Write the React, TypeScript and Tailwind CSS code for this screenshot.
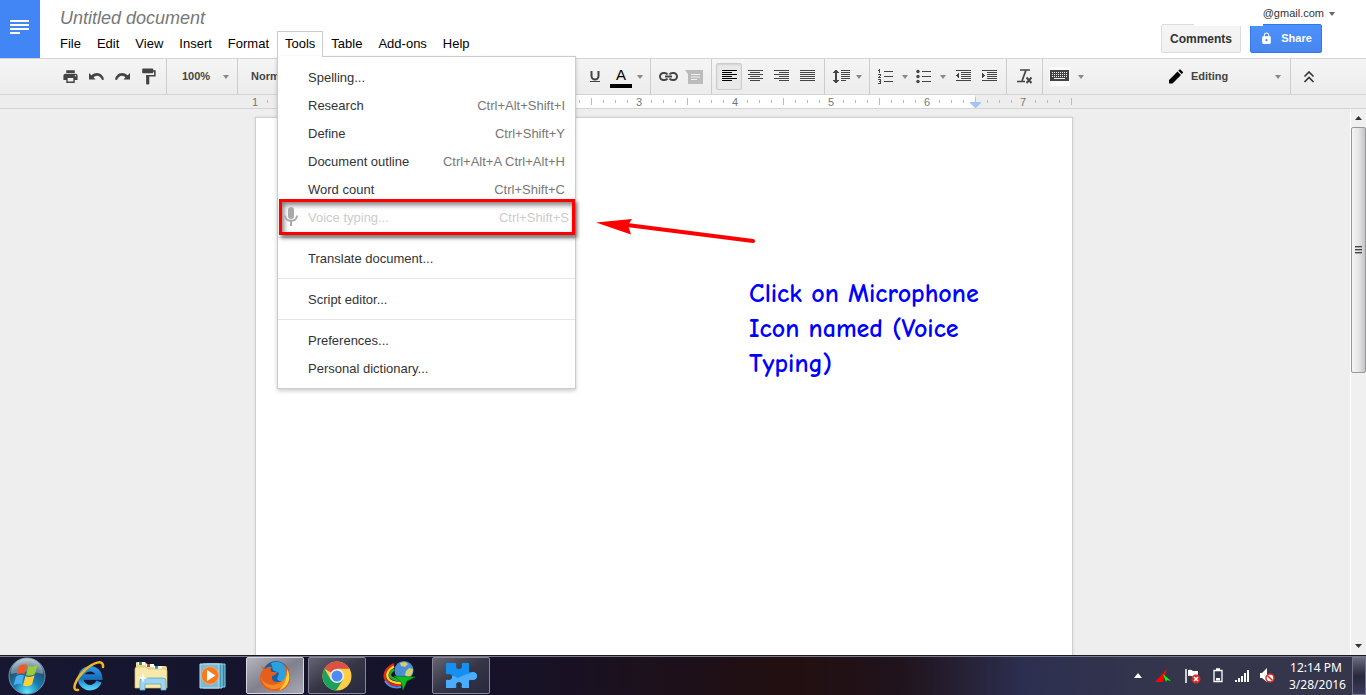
import type { ReactNode } from 'react'
import { MdFormatPaint, MdLock, MdPrint } from 'react-icons/md'

type Bar = [x: number, y: number, width: number]

// Icon made of one-pixel horizontal bars
function Bars({ bars, width = 15, children }: { bars: Bar[]; width?: number; children?: ReactNode }) {
  return (
    <svg width={width} height="13" viewBox={`0 0 ${width} 13`} fill="currentColor" shapeRendering="crispEdges">
      {bars.map(([x, y, w]) => (
        <rect key={y} x={x} y={y} width={w} height="1" />
      ))}
      {children}
    </svg>
  )
}

const rows = [0, 2, 4, 6, 8, 10]
const alignLeft = rows.map((y, i): Bar => [0, y, i % 2 ? 10 : 15])
const alignCenter = rows.map((y, i): Bar => (i % 2 ? [2, y, 10] : [0, y, 15]))
const alignRight = rows.map((y, i): Bar => (i % 2 ? [5, y, 10] : [0, y, 15]))
const justify = rows.map((y): Bar => [0, y, 15])
const indentBars = rows.map((y, i): Bar => (i === 0 || i === 5 ? [0, y, 15] : [5, y, 10]))

function Caret({ className = 'text-[#888]' }: { className?: string }) {
  return (
    <svg width="6" height="4" viewBox="0 0 6 4" className={`shrink-0 ${className}`}>
      <path d="M0 0h6L3 4z" fill="currentColor" />
    </svg>
  )
}

function UndoArrow({ className = '' }: { className?: string }) {
  return (
    <svg width="15" height="10" viewBox="0 0 15 10" fill="currentColor" className={className}>
      <path d="M0 1l2.300 2.300Q5 1 8 1q5.500 0 7 6.500l-2 .5Q11.500 4 8 3.800 6 3.800 4.500 5.300L6.500 7.500H0z" />
    </svg>
  )
}

function ToolButton({ label, active, className = 'w-[26px]', children }: { label: string; active?: boolean; className?: string; children: ReactNode }) {
  return (
    <button
      aria-label={label}
      className={`flex h-[27px] shrink-0 items-center justify-center rounded-xs border ${className} ${
        active ? 'border-[#ccc] bg-[#e9e9e9] text-black shadow-[inset_0_1px_2px_rgba(0,0,0,0.1)]' : 'border-transparent text-[#444]'
      }`}
    >
      {children}
    </button>
  )
}

function Group({ className = 'px-1', children }: { className?: string; children: ReactNode }) {
  return <div className={`flex h-full shrink-0 items-center border-r border-[#ccc] ${className}`}>{children}</div>
}

const menusBefore = ['File', 'Edit', 'View', 'Insert', 'Format']
const menusAfter = ['Table', 'Add-ons', 'Help']

const toolsSections = [
  [
    { name: 'Spelling...' },
    { name: 'Research', keys: 'Ctrl+Alt+Shift+I' },
    { name: 'Define', keys: 'Ctrl+Shift+Y' },
    { name: 'Document outline', keys: 'Ctrl+Alt+A Ctrl+Alt+H' },
    { name: 'Word count', keys: 'Ctrl+Shift+C' },
    { name: 'Voice typing...', keys: 'Ctrl+Shift+S', marked: true },
  ],
  [{ name: 'Translate document...' }],
  [{ name: 'Script editor...' }],
  [{ name: 'Preferences...' }, { name: 'Personal dictionary...' }],
] as { name: string; keys?: string; marked?: boolean }[][]

function ToolsMenu() {
  return (
    <div className="absolute top-[24px] -left-px z-20 w-[299px] border border-[#ccc] bg-white shadow-[0_2px_4px_rgba(0,0,0,0.2)]">
      {/* Joins the open tab to the panel */}
      <span className="absolute -top-px left-0 h-px w-[44px] bg-white" />
      {toolsSections.map((items, i) => (
        <div key={i} className={`py-[6px] ${i ? 'border-t border-[#e5e5e5]' : ''}`}>
          {items.map((item) => (
            <button
              key={item.name}
              className={`relative flex h-7 w-full items-center justify-between pt-[2px] pl-[30px] text-left ${
                item.marked ? 'pr-[6px] text-[#ccc]' : 'pr-[10px] text-[#333]'
              }`}
            >
              {item.marked && (
                <>
                  <span className="absolute inset-y-[-4px] right-0 left-px border-[3px] border-[#f00] shadow-[2px_3px_4px_rgba(0,0,0,0.55),inset_2px_3px_5px_rgba(0,0,0,0.5)]" />
                  <svg className="absolute top-1 left-[6px]" width="14" height="20" viewBox="0 0 14 20" fill="none">
                    <rect x="4" y="0" width="6" height="12" rx="3" fill="#aaa" />
                    <path d="M1 8.500c0 7 12 7 12 0" stroke="#aaa" strokeWidth="2" />
                    <path d="M7 14v5" stroke="#aaa" strokeWidth="2" />
                  </svg>
                </>
              )}
              <span>{item.name}</span>
              {item.keys && <span className={item.marked ? '' : 'text-[#777]'}>{item.keys}</span>}
            </button>
          ))}
        </div>
      ))}
    </div>
  )
}

function Header() {
  const menuClass = 'h-[26px] border border-transparent px-[7px]'
  return (
    <header className="flex h-[58px] shrink-0 bg-white">
      <a href="#home" aria-label="Docs home" className="flex w-10 items-center justify-center bg-[#4285f4]">
        <svg width="20" height="14" viewBox="0 0 20 14" fill="#fff" shapeRendering="crispEdges" className="mb-1">
          <path d="M0 0h19v2H0zM0 4h19v2H0zM0 8h19v2H0zM0 12h10v2H0z" />
        </svg>
      </a>
      <div className="flex flex-col pl-3">
        <h1 className="mt-1 h-[27px] pl-2 text-[18px] leading-7 text-[#777] italic">Untitled document</h1>
        <nav className="flex text-[13px] leading-6 text-black">
          {menusBefore.map((m) => (
            <button key={m} className={menuClass}>{m}</button>
          ))}
          <div className="relative h-[26px] border border-b-0 border-[#ccc] bg-white">
            <button className="h-[24px] px-[7px]">Tools</button>
            <ToolsMenu />
          </div>
          {menusAfter.map((m) => (
            <button key={m} className={menuClass}>{m}</button>
          ))}
        </nav>
      </div>
      <div className="ml-auto flex flex-col items-end pr-[30px]">
        <div className="flex h-6">
          <span className="relative z-10 h-[26px] w-[69px] bg-white" />
          <button className="flex items-center gap-1 pt-[3px] text-[11px] text-[#333]">
            @gmail.com <Caret className="w-2 text-[#666]" />
          </button>
        </div>
        <div className="flex gap-[9px] pr-[14px]">
          <button className="h-[29px] w-20 rounded-xs border border-[#dcdcdc] bg-linear-to-b from-[#f5f5f5] to-[#f1f1f1] text-[12px] font-bold text-[#333]">
            Comments
          </button>
          <button className="flex h-[29px] w-[72px] items-center justify-center gap-2 rounded-xs border border-[#3079ed] bg-linear-to-b from-[#4d90fe] to-[#4787ed] text-[11px] font-bold text-white">
            <MdLock size={13} /> Share
          </button>
        </div>
      </div>
    </header>
  )
}

function Toolbar() {
  const selectClass = 'min-w-0 flex-1 appearance-none bg-transparent text-[11px] font-bold text-[#444] outline-none'
  return (
    <div className="flex h-[37px] shrink-0 items-center border-y border-[#d4d4d4] bg-linear-to-b from-[#f5f5f5] to-[#ececec]">
      <Group className="pr-[5px] pl-[57px]">
        <ToolButton label="Print"><MdPrint size={17} /></ToolButton>
        <ToolButton label="Undo"><UndoArrow /></ToolButton>
        <ToolButton label="Redo"><UndoArrow className="-scale-x-100" /></ToolButton>
        <ToolButton label="Paint format">
          <MdFormatPaint size={19} />
        </ToolButton>
      </Group>
      <Group className="w-[71px] pr-2 pl-[15px]">
        <select aria-label="Zoom" className={selectClass}><option>100%</option></select>
        <Caret />
      </Group>
      <div className="flex w-[344px] shrink-0 items-center pl-[13px]">
        <select aria-label="Styles" className={selectClass}><option>Normal text</option></select>
      </div>
      <Group className="pr-[5px]">
        <ToolButton label="Underline">
          <svg width="12" height="13" viewBox="0 0 12 13" fill="none" stroke="currentColor">
            <path d="M2.500 1v5a3.500 3.500 0 0 0 7 0V1" strokeWidth="2" />
            <path d="M1 11.500h10" />
          </svg>
        </ToolButton>
        <ToolButton label="Text color">
          <span className="border-b-4 border-black px-[6px] text-[15px] leading-[18px] text-black">A</span>
        </ToolButton>
        <button aria-label="More colors" className="flex w-[11px] justify-center"><Caret /></button>
      </Group>
      <Group>
        <ToolButton label="Insert link">
          <svg width="19" height="9" viewBox="0 0 19 9" fill="none" stroke="currentColor" strokeWidth="2">
            <path d="M8.500 2.500Q7.500 1 5.500 1h-1a3.500 3.500 0 0 0 0 7h1q2 0 3-1.500M10.500 2.500Q11.500 1 13.500 1h1a3.500 3.500 0 0 1 0 7h-1q-2 0-3-1.500M6 4.500h7" />
          </svg>
        </ToolButton>
        <ToolButton label="Insert comment">
          <svg width="18" height="14" viewBox="0 0 18 14">
            <path d="M0 0h18v14H3V4z" fill="#bbb" />
            <path d="M6 4.500h9M6 7h9M6 9.500h6" stroke="#f1f1f1" />
          </svg>
        </ToolButton>
      </Group>
      <Group>
        <ToolButton label="Left align" active><Bars bars={alignLeft} /></ToolButton>
        <ToolButton label="Center align"><Bars bars={alignCenter} /></ToolButton>
        <ToolButton label="Right align"><Bars bars={alignRight} /></ToolButton>
        <ToolButton label="Justify"><Bars bars={justify} /></ToolButton>
      </Group>
      <Group>
        <ToolButton label="Line spacing" className="w-9 gap-[6px]">
          <Bars width={17} bars={rows.map((y, i) => [8, y, i === 5 ? 5 : 9])}>
            <path d="M2 0h2v13H2zM1 1h4v1H1zM0 2h6v1H0zM0 10h6v1H0zM1 11h4v1H1z" />
          </Bars>
          <Caret />
        </ToolButton>
      </Group>
      <Group>
        <ToolButton label="Numbered list" className="w-[38px] gap-[9px]">
          <svg width="15" height="15" viewBox="0 0 15 15" fill="currentColor" shapeRendering="crispEdges">
            <path d="M6 2h9v1H6zM6 7h9v1H6zM6 12h9v1H6z" />
            <path d="M1 0h1v4H1zM0 1h1v1H0zM0 5h3v1H0zM2 6h1v1H2zM1 7h1v1H1zM0 8h3v1H0zM0 10h3v1H0zM2 11h1v3H2zM1 12h1v1H1zM0 14h3v1H0z" />
          </svg>
          <Caret />
        </ToolButton>
        <ToolButton label="Bulleted list" className="w-[38px] gap-[9px]">
          <svg width="15" height="15" viewBox="0 0 15 15" fill="currentColor">
            <path d="M6 2h9v1H6zM6 7h9v1H6zM6 12h9v1H6z" />
            <circle cx="2" cy="2.500" r="1.700" />
            <circle cx="2" cy="7.500" r="1.700" />
            <circle cx="2" cy="12.500" r="1.700" />
          </svg>
          <Caret />
        </ToolButton>
        <ToolButton label="Decrease indent"><Bars bars={indentBars}><path d="M3 2v7L0 5.500z" /></Bars></ToolButton>
        <ToolButton label="Increase indent"><Bars bars={indentBars}><path d="M0 2v7l3-3.500z" /></Bars></ToolButton>
      </Group>
      <Group className="pr-1 pl-[5px]">
        <ToolButton label="Clear formatting">
          <svg width="16" height="15" viewBox="0 0 16 15" fill="none" stroke="currentColor">
            <path d="M3 1h10M0 12.500h8" strokeWidth="1.500" />
            <path d="M9 1L5 12" strokeWidth="1.700" />
            <path d="M9.500 8.500l5 5.500M14.500 8.500l-5 5.500" strokeWidth="1.900" />
          </svg>
        </ToolButton>
      </Group>
      <ToolButton label="Input tools" className="ml-[5px] w-9 gap-2">
        <svg width="21" height="19" viewBox="0 0 21 19" shapeRendering="crispEdges" className="shrink-0">
          <path d="M0 0h21v19H0z" fill="#fafafa" />
          <path d="M1 3h19v11H1z" fill="#444" />
          <path d="M3 5.500h15M3 7.500h15M3 9.500h15" stroke="#eee" strokeDasharray="1 1" />
          <path d="M5 11.500h11" stroke="#eee" />
        </svg>
        <Caret />
      </ToolButton>
      <div className="ml-auto flex h-full items-center">
        <div className="flex h-full w-[123px] items-center border-r border-[#ccc] pr-[9px]">
          <svg width="15" height="15" viewBox="0 0 15 15" className="mr-2 shrink-0">
            <path d="M1 11l8.500-8.500 3.500 3.500L4.500 14.500H1zM10.300 1.700l1-1q.7-.7 1.400 0l2 2q.7.700 0 1.400l-1 1z" fill="#000" />
          </svg>
          <select aria-label="Mode" className={selectClass}><option>Editing</option></select>
          <Caret />
        </div>
        <button aria-label="Hide menus" className="mr-[45px] ml-[6px] flex w-6 justify-center text-[#333]">
          <svg width="12" height="12" viewBox="0 0 12 12" fill="none" stroke="currentColor" strokeWidth="1.600">
            <path d="M1.500 5.500L6 1l4.500 4.500M1.500 11L6 6.500l4.500 4.500" />
          </svg>
        </button>
      </div>
    </div>
  )
}

const rulerLabels = [
  { inch: 0, label: 1 },
  { inch: 4, label: 3 },
  { inch: 5, label: 4 },
  { inch: 6, label: 5 },
  { inch: 7, label: 6 },
  { inch: 8, label: 7 },
]

function Ruler() {
  const ticks = Array.from({ length: 69 }, (_, i) => i).filter((i) => i % 8 !== 0)
  return (
    <div className="flex h-[14px] shrink-0 justify-center border-b border-[#d4d4d4] bg-[#ededed] pr-[38px]">
      <svg width="818" height="13" viewBox="0 0 818 13" className="overflow-visible font-['Liberation_Sans',sans-serif]">
        <path d="M96 0h624v13H96z" fill="#fff" />
        {ticks.map((i) => (
          <path key={i} d={i % 4 ? `M${i * 12 + 0.5} 5v3` : `M${i * 12 + 0.5} 3v7`} stroke="#bbb" />
        ))}
        {rulerLabels.map(({ inch, label }) => (
          <text key={inch} x={inch * 96} y="11" textAnchor="middle" fontSize="11" fill="#777">{label}</text>
        ))}
        <path d="M720.500 2v6" stroke="#bbb" />
        <path d="M715 7h11v1l-5 5h-1l-5-5z" fill="#a4c4f9" />
      </svg>
    </div>
  )
}

function ScrollBar() {
  return (
    <div className="flex w-4 shrink-0 flex-col border-l border-white bg-[#f0f0f0]">
      <div className="flex h-[18px] items-center justify-center">
        <svg width="7" height="4" viewBox="0 0 7 4"><path d="M0 4h7L3.500 0z" fill="#333" /></svg>
      </div>
      <div className="flex h-[246px] items-center justify-center rounded-xs border border-[#979797] bg-linear-to-r from-[#f5f5f5] via-[#e6e6e8] to-[#c4c4c8]">
        <svg width="7" height="8" viewBox="0 0 7 8" shapeRendering="crispEdges">
          <path d="M0 .5h7M0 3.500h7M0 6.500h7" stroke="#444" />
          <path d="M0 1.500h7M0 4.500h7M0 7.500h7" stroke="#aaa" />
        </svg>
      </div>
      <div className="mt-auto flex h-[18px] items-center justify-center">
        <svg width="7" height="4" viewBox="0 0 7 4"><path d="M0 0h7L3.500 4z" fill="#333" /></svg>
      </div>
    </div>
  )
}

function Canvas() {
  return (
    <main className="flex min-h-0 flex-1 bg-[#eee]">
      <div className="flex min-w-0 flex-1 justify-center overflow-hidden pt-2 pr-[22px]">
        <article className="relative w-[818px] shrink-0 border border-b-0 border-[#d0d0d0] bg-white shadow-[0_0_3px_rgba(0,0,0,0.1)]">
          <svg className="absolute top-[98px] left-[340px]" width="162" height="30" viewBox="0 0 162 30">
            <path d="M0 6.500L36 3 32 9 35 18.500z" fill="#f00" />
            <path d="M31 9L157 25" stroke="#f00" strokeWidth="4" strokeLinecap="round" />
          </svg>
          <p className="absolute top-[159px] left-[493px] w-[250px] font-['Comic_Sans_MS','Comic_Neue',Lato,sans-serif] text-[26px] leading-[35px] font-bold text-[#00f]">
            Click on Microphone Icon named (Voice Typing)
          </p>
        </article>
      </div>
      <ScrollBar />
    </main>
  )
}

function StartIcon() {
  return (
    <svg width="38" height="38" viewBox="0 0 38 38">
      <defs>
        <radialGradient id="orb" cx=".5" cy=".95" r=".9">
          <stop offset="0" stopColor="#5ce8ff" />
          <stop offset=".4" stopColor="#187fb5" />
          <stop offset=".75" stopColor="#245273" />
          <stop offset="1" stopColor="#8fa5b4" />
        </radialGradient>
      </defs>
      <circle cx="19" cy="19" r="18" fill="url(#orb)" stroke="#6f94a8" />
      <path d="M3 17a16 16 0 0 1 32 0q-16-5-32 0z" fill="#fff" opacity=".32" />
      <path d="M11 9q4-3 8-1l-2.500 9q-4-2-8 1z" fill="#f15a24" />
      <path d="M20.500 8.500q4 2 9-.5l-2.500 9q-4 3-9 1z" fill="#9acb3c" />
      <path d="M8 19.500q4-3 8-1l-2.500 9q-4-2-8 1z" fill="#4aaef0" />
      <path d="M17.500 19q4 2 9-.5l-2.500 9q-4 3-9 1z" fill="#ffd035" />
    </svg>
  )
}

function ExplorerIcon() {
  return (
    <svg width="34" height="32" viewBox="0 0 34 32" fill="none">
      <defs>
        <linearGradient id="ie" x1="0" y1="0" x2="0" y2="1">
          <stop offset="0" stopColor="#2b91dc" />
          <stop offset=".5" stopColor="#1470c0" />
          <stop offset="1" stopColor="#4fc9f5" />
        </linearGradient>
      </defs>
      <path d="M27 21.500a9.500 9.500 0 1 1 .5-4.500H10" stroke="url(#ie)" strokeWidth="5.500" />
      <path d="M6 30C-1 31 3 20 12 11S32-1 31 7" stroke="#f2b620" strokeWidth="2.500" strokeLinecap="round" />
    </svg>
  )
}

function FolderIcon() {
  return (
    <svg width="34" height="30" viewBox="0 0 34 30">
      <path d="M2 2q0-1 1-1h8l2 2h6l2 2h10q2 0 2 2v20H2z" fill="#eed98a" />
      <path d="M4 1h7v3H4z" fill="#fff" />
      <path d="M5 1h3v3H5z" fill="#1ba034" />
      <path d="M12 3h8v3h-8z" fill="#fff" />
      <path d="M13 3h3v3h-3z" fill="#d9402b" />
      <path d="M20 5h8v3h-8z" fill="#fff" />
      <path d="M21 5h3v3h-3z" fill="#2b8fe0" />
      <path d="M1 8q0-2 2-2h9l2 2h17q2 0 2 2v17H1z" fill="#f7e9a9" stroke="#d8bd62" strokeWidth=".7" />
      <path d="M6 29v-9q0-3 3-3h20q3 0 3 3v9h-5v-6H11v6z" fill="#9ed4ee" stroke="#5aa6ce" strokeWidth=".8" />
      <path d="M9 12l1 4 4 1-4 1-1 4-1-4-4-1 4-1z" fill="#fff" />
    </svg>
  )
}

function PlayerIcon() {
  return (
    <svg width="28" height="26" viewBox="0 0 28 26">
      <path d="M7 1h19v23H7z" fill="#2f83a8" stroke="#8ccbe4" />
      <path d="M4 1h19v24H4z" fill="#3f97bd" stroke="#9bd6ec" />
      <path d="M1 1h19v24H1z" fill="#7fb9d3" stroke="#b7e2f2" />
      <circle cx="11" cy="12.500" r="8.700" fill="#f47a20" stroke="#ffb27a" strokeWidth=".7" />
      <path d="M8 7l8.500 5.500L8 18z" fill="#fff" />
    </svg>
  )
}

function FirefoxIcon() {
  return (
    <svg width="32" height="32" viewBox="0 0 32 32">
      <circle cx="17" cy="14" r="13" fill="#155fa8" />
      <path d="M12 3q9-4 15 4 3 6 0 12-5 5-9 0l2-6-6-3z" fill="#2ca1dc" />
      <path d="M2 5l4 4q3-3 7-2-3 3 0 5h5q-1 3-5 4-1 5 4 6 8 1 10-7 1-6-4-11 7 3 8 11 1 15-14 16Q3 31 1 19 1 13 4 10z" fill="#e65e1c" />
      <path d="M2 17q3 8 12 8 10-1 14-11 1 13-11 15Q5 30 2 17z" fill="#f58a25" />
      <path d="M28 9q3 5 2 11-2 8-10 10 9-8 8-21z" fill="#ffcf3d" />
    </svg>
  )
}

function ChromeIcon() {
  return (
    <svg width="30" height="30" viewBox="0 0 30 30">
      <circle cx="15" cy="15" r="14.500" fill="#ffcd46" />
      <path d="M15 15L2.440 7.750A14.500 14.500 0 0 1 27.560 7.750H15z" fill="#dd5144" />
      <path d="M2.440 7.750A14.500 14.500 0 0 0 14 29.500l7.300-10.900L15 15 8.700 18.600z" fill="#1aa15f" />
      <circle cx="15" cy="15" r="7" fill="#f1f1f1" />
      <circle cx="15" cy="15" r="5.500" fill="#4c8bf5" />
    </svg>
  )
}

function DownloaderIcon() {
  return (
    <svg width="33" height="30" viewBox="0 0 33 30" fill="none">
      <path d="M11 3Q0 9 2 17t16 7" stroke="#e52620" strokeWidth="2.500" />
      <path d="M11 5.500Q3 10 4.500 16T18 22" stroke="#ffd91c" strokeWidth="2.500" />
      <path d="M11 8.500Q6 12 7 15t11 4.500" stroke="#24ae38" strokeWidth="2.500" />
      <path d="M2 20q5 8 16 6" stroke="#4b8ee8" strokeWidth="2" />
      <circle cx="21" cy="9.500" r="9.500" fill="#4a8fd4" />
      <path d="M17 2l5-1 3 2-3 3-4-1zM26 7l4 1q0 6-5 9l-3-3 1-4z" fill="#d2cf72" />
      <path d="M11 15l21 1-8 4-4 9-2-8z" fill="#12bb24" stroke="#077a15" strokeWidth=".7" />
    </svg>
  )
}

function PuzzleIcon() {
  return (
    <svg width="31" height="27" viewBox="0 0 31 27">
      <clipPath id="piece">
        <path d="M0 1h9q2 0 1 3 0 3 3 3t3-3q-1-3 1-3h6v8q0 2 3 1 5 0 5 4t-5 4q-3-1-3 1v7h-6q-2 0-1-3 0-3-3-3t-3 3q1 3-1 3H0v-7q0-2 3-1 3 0 3-3t-3-3q-3 1-3-1z" />
      </clipPath>
      <g clipPath="url(#piece)">
        <path d="M0 0h31v27H0z" fill="#168ff2" />
        <path d="M0 18q6-7 12-2 5-3 10-4l9-4v19H0z" fill="#4aacfb" />
      </g>
    </svg>
  )
}

const taskApps = [
  { name: 'Internet Explorer', icon: <ExplorerIcon />, state: '' },
  { name: 'Windows Explorer', icon: <FolderIcon />, state: '' },
  { name: 'Media Player', icon: <PlayerIcon />, state: '' },
  { name: 'Firefox', icon: <FirefoxIcon />, state: 'active' },
  { name: 'Chrome', icon: <ChromeIcon />, state: 'open' },
  { name: 'Download Manager', icon: <DownloaderIcon />, state: '' },
  { name: 'Extensions', icon: <PuzzleIcon />, state: 'open' },
]

function appStyle(state: string) {
  if (state === 'active') return 'border-[#d5d5df] bg-linear-to-br from-[#b5b5bf] via-[#81818d] to-[#a9a9b5]'
  if (state === 'open') return 'border-[#85859a] bg-linear-to-br from-[#646472] via-[#353545] to-[#292940]'
  return 'border-transparent'
}

function TrayIcons() {
  return (
    <div className="flex items-center">
      <svg width="8" height="5" viewBox="0 0 8 5" className="mr-[13px]"><path d="M0 5h8L4 0z" fill="#fff" /></svg>
      <svg width="16" height="14" viewBox="0 0 16 14" className="mr-[14px]">
        <path d="M0 13L12 0 8 13z" fill="#f00" />
        <path d="M8 5l8 7-4-1-1 2z" fill="#0f0" />
      </svg>
      <svg width="16" height="16" viewBox="0 0 16 16" className="mr-3">
        <path d="M1 1v14" stroke="#fff" strokeWidth="1.500" />
        <path d="M3 2q3-1 5 1h5v6H8Q6 7 3 8z" fill="#fff" />
        <circle cx="11" cy="11" r="4.500" fill="#d92b24" />
        <path d="M9 9l4 4m0-4l-4 4" stroke="#fff" strokeWidth="1.500" />
      </svg>
      <svg width="10" height="15" viewBox="0 0 10 15" className="mr-3">
        <path d="M3 1h4M1 2.500h8v11H1z" fill="none" stroke="#fff" strokeWidth="1.300" />
        <path d="M3 10h4v2.500H3z" fill="#fff" />
      </svg>
      <svg width="15" height="12" viewBox="0 0 15 12" fill="#fff" className="mr-[10px]" shapeRendering="crispEdges">
        <path d="M0 10h2v2H0zM3 8h2v4H3zM6 6h2v6H6zM9 3h2v9H9zM12 0h2v12h-2z" />
      </svg>
      <svg width="15" height="15" viewBox="0 0 15 15">
        <path d="M0 5h2l5-5v14L2 10H0z" fill="#fff" />
        <circle cx="10" cy="10" r="4" fill="#fff" stroke="#d92b24" strokeWidth="1.500" />
        <path d="M7.500 7.500l5 5" stroke="#d92b24" strokeWidth="1.500" />
      </svg>
    </div>
  )
}

function Taskbar() {
  return (
    <footer className="flex h-10 shrink-0 items-stretch border-t border-[#1b1b1b] bg-[linear-gradient(90deg,#171731_0%,#15122a_35%,#220f10_58%,#20131c_66%,#2c2f50_75%,#35364c_86%)] shadow-[inset_0_1px_0_#77778a]">
      <button aria-label="Start" className="flex w-[54px] items-center justify-center"><StartIcon /></button>
      <div className="ml-[6px] flex gap-1 py-px">
        {taskApps.map((app) => (
          <button key={app.name} aria-label={app.name} className={`flex w-[58px] items-center justify-center rounded-xs border ${appStyle(app.state)}`}>
            {app.icon}
          </button>
        ))}
      </div>
      <div className="ml-auto flex items-center">
        <TrayIcons />
        <time className="mr-[9px] ml-[14px] w-[54px] text-center font-['Segoe_UI','Noto_Sans',sans-serif] text-[12px] leading-[17px] whitespace-nowrap text-white">
          <span className="block">12:14 PM</span>
          <span className="block">3/28/2016</span>
        </time>
        <button aria-label="Show desktop" className="h-[38px] w-[14px] border border-[#75758a] bg-linear-to-b from-[#6a6a7c] via-[#28283c] to-[#3b3b5c]" />
      </div>
    </footer>
  )
}

export default function App() {
  return (
    <div className="flex h-screen flex-col overflow-hidden font-['Liberation_Sans',Arial,sans-serif]">
      <Header />
      <Toolbar />
      <Ruler />
      <Canvas />
      <Taskbar />
    </div>
  )
}
